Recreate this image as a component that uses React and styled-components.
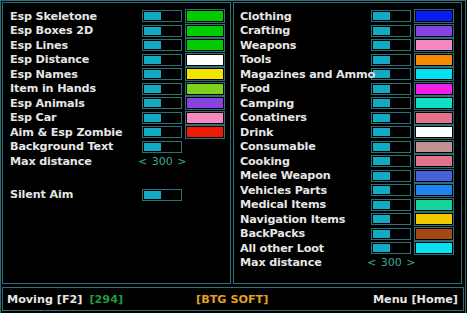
import React from 'react';
import styled, { createGlobalStyle } from 'styled-components';

const GlobalStyle = createGlobalStyle`
  html, body {
    margin: 0;
    background: #000;
  }
  body {
    font-family: 'DejaVu Sans', 'Liberation Sans', sans-serif;
  }
`;

const line = '#2b6f78';

const Frame = styled.div`
  width: 462px;
  height: 310px;
  border: 1px solid ${line};
  padding: 1px;
  display: flex;
  flex-direction: column;
  gap: 3px;
  background: #000;
`;

const Columns = styled.div`
  display: flex;
  gap: 2px;
  height: 282px;
`;

const Panel = styled.div`
  box-sizing: border-box;
  width: 229px;
  flex: none;
  border: 1px solid ${line};
  padding: 6px 0 0 ${(p) => p.pl}px;
`;

const Row = styled.div`
  display: flex;
  align-items: center;
  height: 14.5px;
  margin-top: ${(p) => p.gap || 0}px;
`;

const Label = styled.div`
  width: ${(p) => p.w}px;
  flex: none;
  position: relative;
  z-index: 1;
  color: #e6e6e6;
  font-size: 11.2px;
  font-weight: bold;
  white-space: nowrap;
  letter-spacing: -0.15px;
`;

const Toggle = styled.div`
  width: 36px;
  height: 10px;
  border: 1px solid ${line};
  flex: none;
  display: flex;
  align-items: center;
  padding: 0 1px;
  &::before {
    content: '';
    width: 17px;
    height: 8px;
    background: #14a9c3;
  }
`;

const Swatch = styled.div`
  width: 36px;
  height: 10px;
  border: 1px solid ${line};
  margin-left: 3px;
  flex: none;
  padding: 1px;
  &::before {
    content: '';
    display: block;
    width: 100%;
    height: 100%;
    background: ${(p) => p.c};
  }
`;

const Range = styled.div`
  color: #3fa993;
  font-size: 11px;
  margin-left: -4px;
  word-spacing: 1px;
`;

const Footer = styled.div`
  height: 22px;
  border: 1px solid ${line};
  display: flex;
  align-items: center;
  padding: 0 5px 0 4px;
  font-size: 11.2px;
  font-weight: bold;
`;

const Text = styled.span`
  color: ${(p) => p.c || '#e6e6e6'};
  margin-left: ${(p) => p.ml || 0}px;
  white-space: pre;
`;

const Spacer = styled.div`
  flex: 1;
`;

const leftRows = [
  ['Esp Skeletone', '#00cc00'],
  ['Esp Boxes 2D', '#00cc00'],
  ['Esp Lines', '#00cc00'],
  ['Esp Distance', '#ffffff'],
  ['Esp Names', '#f2e400'],
  ['Item in Hands', '#7fd11c'],
  ['Esp Animals', '#8842e0'],
  ['Esp Car', '#f588c0'],
  ['Aim & Esp Zombie', '#ee1a06'],
];

const rightRows = [
  ['Clothing', '#0a1cf2'],
  ['Crafting', '#8842e0'],
  ['Weapons', '#f588c0'],
  ['Tools', '#f28a00'],
  ['Magazines and Ammo', '#08e0f2'],
  ['Food', '#f020e8'],
  ['Camping', '#12e0c4'],
  ['Conatiners', '#e5728c'],
  ['Drink', '#ffffff'],
  ['Consumable', '#c29090'],
  ['Cooking', '#e5728c'],
  ['Melee Weapon', '#4562dc'],
  ['Vehicles Parts', '#1f84f0'],
  ['Medical Items', '#16d49a'],
  ['Navigation Items', '#f2c800'],
  ['BackPacks', '#a34a14'],
  ['All other Loot', '#08e0f2'],
];

const App = () => {
  return (
    <>
      <GlobalStyle />
      <Frame>
        <Columns>
          <Panel pl={7}>
            {leftRows.map(([name, c]) => (
              <Row key={name}>
                <Label w={132}>{name}</Label>
                <Toggle />
                <Swatch c={c} />
              </Row>
            ))}
            <Row>
              <Label w={132}>Background Text</Label>
              <Toggle />
            </Row>
            <Row>
              <Label w={132}>Max distance</Label>
              <Range>&lt; 300 &gt;</Range>
            </Row>
            <Row gap={19}>
              <Label w={132}>Silent Aim</Label>
              <Toggle />
            </Row>
          </Panel>
          <Panel pl={6}>
            {rightRows.map(([name, c]) => (
              <Row key={name}>
                <Label w={131}>{name}</Label>
                <Toggle />
                <Swatch c={c} />
              </Row>
            ))}
            <Row>
              <Label w={131}>Max distance</Label>
              <Range>&lt; 300 &gt;</Range>
            </Row>
          </Panel>
        </Columns>
        <Footer>
          <Text>Moving [F2]</Text>
          <Text c="#1f9e3a" ml={7}>[294]</Text>
          <Text c="#e0a024" ml={73}>[BTG SOFT]</Text>
          <Spacer />
          <Text>Menu [Home]</Text>
        </Footer>
      </Frame>
    </>
  );
};

export default App;
